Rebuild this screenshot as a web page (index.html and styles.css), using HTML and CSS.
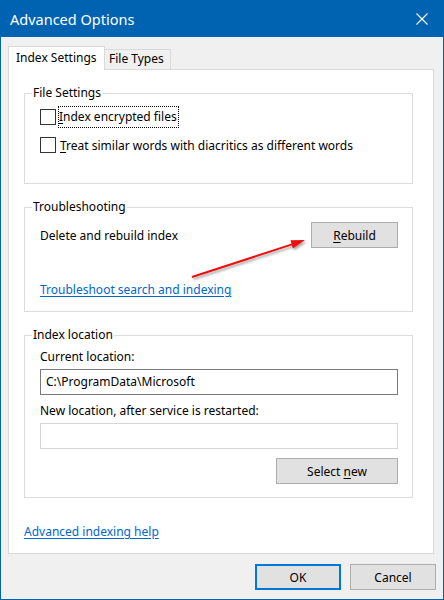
FILE: index.html
```html
<!DOCTYPE html>
<html lang="en">
<head>
    <meta charset="UTF-8">
    <title>Advanced Options</title>
    <link rel="stylesheet" href="styles.css">
</head>
<body>
    <div class="window">
        <div class="titlebar">
            <span class="title">Advanced Options</span>
            <svg class="close" width="12" height="12" viewBox="0 0 12 12">
                <path d="M0.5 0.5 L11.5 11.5 M11.5 0.5 L0.5 11.5" stroke="#fff" stroke-width="1.1" fill="none"/>
            </svg>
        </div>

        <div class="dialog-body">
            <div class="tabs">
                <div class="tab active">Index Settings</div>
                <div class="tab">File Types</div>
            </div>

            <div class="panel">
                <fieldset class="group group-files">
                    <legend>File Settings</legend>
                    <label class="check first">
                        <span class="box"></span>
                        <span class="focus"><u>I</u>ndex encrypted files</span>
                    </label>
                    <label class="check">
                        <span class="box"></span>
                        <span><u>T</u>reat similar words with diacritics as different words</span>
                    </label>
                </fieldset>

                <fieldset class="group group-trouble">
                    <legend>Troubleshooting</legend>
                    <div class="row">
                        <span>Delete and rebuild index</span>
                        <button class="btn btn-rebuild"><u>R</u>ebuild</button>
                    </div>
                    <a class="link link-trouble" href="#">Troubleshoot search and indexing</a>
                </fieldset>

                <fieldset class="group group-location">
                    <legend>Index location</legend>
                    <div class="caption first">Current location:</div>
                    <div class="field">C:\ProgramData\Microsoft</div>
                    <div class="caption">New location, after service is restarted:</div>
                    <div class="field empty"></div>
                    <div class="actions">
                        <button class="btn btn-select">Select <u>n</u>ew</button>
                    </div>
                </fieldset>

                <a class="link link-help" href="#">Advanced indexing help</a>
            </div>

            <div class="footer">
                <button class="btn btn-ok">OK</button>
                <button class="btn">Cancel</button>
            </div>
        </div>

        <!-- red callout pointing at the Rebuild button -->
        <svg class="arrow" width="130" height="52" viewBox="0 0 130 52">
            <defs>
                <filter id="shadow" x="-10%" y="-30%" width="130%" height="180%">
                    <feDropShadow dx="1.5" dy="2" stdDeviation="1.2" flood-color="#000" flood-opacity="0.35"/>
                </filter>
            </defs>
            <g filter="url(#shadow)">
                <line x1="7" y1="45" x2="107" y2="12.4" stroke="#ee1111" stroke-width="2"/>
                <polygon points="120,8 107.9,16.4 105.5,8.3" fill="#ee1111"/>
            </g>
        </svg>
    </div>
</body>
</html>
```

FILE: styles.css
```css
* {
    box-sizing: border-box;
}

body {
    margin: 0;
    font-family: 'Noto Sans', 'Open Sans', sans-serif;
    font-size: 12px;
    color: #000;
}

.window {
    position: relative;
    width: 444px;
    height: 600px;
    border: 1px solid #0063b1;
    background: #f0f0f0;
}

.titlebar {
    height: 36px;
    background: #0063b1;
    color: #fff;
    display: flex;
    align-items: center;
    justify-content: space-between;
    padding: 0 15px 0 9px;
}

.title {
    font-size: 14.5px;
    padding-bottom: 1px;
}

.close {
    display: block;
    margin-bottom: 1px;
}

.dialog-body {
    padding: 9px 0 0 7px;
}

/* tab strip */
.tabs {
    display: flex;
    align-items: flex-end;
    height: 23px;
}

.tab {
    border: 1px solid #d9d9d9;
    background: #f0f0f0;
    height: 20px;
    line-height: 18px;
    padding: 0 4px;
    width: 66px;
    border-left: none;
    border-bottom: none;
}

.tab.active {
    position: relative;
    z-index: 1;
    width: 97px;
    height: 24px;
    margin-bottom: -1px;
    border-left: 1px solid #d9d9d9;
    border-right: 1px solid #d9d9d9;
    background: #fff;
    line-height: 22px;
    padding: 0 7px;
}

.panel {
    width: 426px;
    height: 485px;
    border: 1px solid #d9d9d9;
    background: #fff;
    padding: 0 0 0 15px;
    display: flex;
    flex-direction: column;
    align-items: flex-start;
}

/* group boxes */
.group {
    width: 389px;
    margin: 0;
    padding: 0 14px 0 15px;
    border: 1px solid #dcdcdc;
    display: flex;
    flex-direction: column;
    align-items: flex-start;
}

.group legend {
    margin-left: -8px;
    padding: 0 1px;
    line-height: 16px;
}

.group-files {
    margin-top: 15px;
    height: 99px;
}

.group-trouble {
    margin-top: 15px;
    height: 113px;
    padding-bottom: 12px;
}

.group-location {
    margin-top: 15px;
    height: 171px;
}

.check {
    display: flex;
    align-items: center;
    height: 20px;
    margin-top: 8px;
    gap: 4px;
}

.check.first {
    margin-top: 6px;
}

.check .box {
    width: 16px;
    height: 16px;
    border: 1px solid #333;
    background: #fff;
}

.check .focus {
    outline: 1px dotted #000;
    padding: 1px 1px 2px 0;
    margin-left: -1px;
}

u {
    text-decoration-thickness: 1px;
    text-underline-offset: 2px;
}

.row {
    width: 100%;
    display: flex;
    align-items: center;
    justify-content: space-between;
    margin-top: 7px;
}

.link {
    color: #0066cc;
    text-decoration: underline;
    text-underline-offset: 2px;
    line-height: 16px;
}

.link-trouble {
    margin-top: 34px;
}

.link-help {
    margin-top: 26px;
    margin-left: 0;
}

.caption {
    line-height: 16px;
    margin-top: 8px;
}

.caption.first {
    margin-top: 6px;
}

.field {
    width: 100%;
    height: 26px;
    margin-top: 4px;
    border: 1px solid #7a7a7a;
    background: #fff;
    line-height: 23px;
    padding: 0 5px;
}

.field.empty {
    border-color: #d4d4d4;
}

.actions {
    width: 100%;
    display: flex;
    justify-content: flex-end;
    margin-top: 9px;
}

/* push buttons */
.btn {
    font-family: inherit;
    font-size: 12px;
    color: #000;
    height: 26px;
    width: 86px;
    background: #e1e1e1;
    border: 1px solid #adadad;
    padding: 0;
}

.btn-rebuild {
    width: 87px;
}

.btn-select {
    width: 122px;
}

.btn-ok {
    border: 2px solid #0078d7;
}

.footer {
    display: flex;
    justify-content: flex-end;
    gap: 9px;
    margin-top: 10px;
    padding-right: 7px;
}

.arrow {
    position: absolute;
    left: 184px;
    top: 231px;
}
```
